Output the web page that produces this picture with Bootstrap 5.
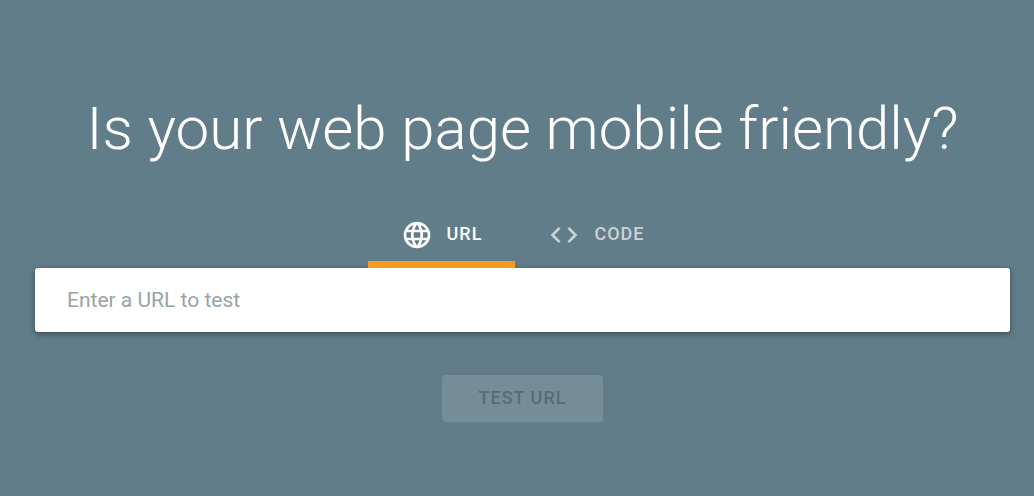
<!DOCTYPE html>
<html lang="en">
<head>
<meta charset="utf-8">
<meta name="viewport" content="width=device-width, initial-scale=1">
<title>Mobile-Friendly Test</title>
<link href="https://cdn.jsdelivr.net/npm/bootstrap@5.3.0/dist/css/bootstrap.min.css" rel="stylesheet">
<style>
body{background:#617d89;color:#fff;font-family:Roboto,sans-serif}
.test-page{padding:89px 24px 72px 35px}
.headline{font-size:60px;font-weight:300;line-height:80px;margin-bottom:35px}
.mode-tab{gap:14px;height:64px;padding:2px 33px 0;border:0;border-bottom:7px solid transparent;background:none;color:#cbd3d7;font-size:18px;font-weight:500;letter-spacing:1px;line-height:28px}
.mode-tab.active{color:#fff;border-bottom-color:#f89a20}
.mode-tab svg{width:32px;height:32px;margin-top:3px;fill:currentColor}
.url-field{height:64px;padding:0 32px;border:0;border-radius:3px;font-size:21px;box-shadow:0 2px 6px rgba(0,0,0,.4)}
.url-field::placeholder{color:#98a4a8}
.test-btn{margin-top:43px;height:47px;width:161px;padding:0 0 2px;border:0;border-radius:4px;background:#758d98;color:#546e7a;font-size:18px;font-weight:500;letter-spacing:1px}
</style>
</head>
<body>
<main class="test-page text-center">
<h1 class="headline">Is your web page mobile friendly?</h1>
<div class="d-flex justify-content-center" role="tablist">
<button type="button" class="mode-tab active d-flex align-items-center" role="tab" aria-selected="true"><svg viewBox="0 0 24 24" aria-hidden="true"><path d="M11.99 2C6.47 2 2 6.48 2 12s4.47 10 9.99 10C17.52 22 22 17.52 22 12S17.52 2 11.99 2zm6.93 6h-2.95a15.65 15.65 0 0 0-1.38-3.56A8.03 8.03 0 0 1 18.92 8zM12 4.04c.83 1.2 1.48 2.53 1.91 3.96h-3.82c.43-1.43 1.08-2.76 1.91-3.96zM4.26 14C4.1 13.36 4 12.69 4 12s.1-1.36.26-2h3.38c-.08.66-.14 1.32-.14 2s.06 1.34.14 2H4.26zm.82 2h2.95c.32 1.25.78 2.45 1.38 3.56A7.99 7.99 0 0 1 5.08 16zm2.95-8H5.08a7.99 7.99 0 0 1 4.33-3.56A15.65 15.65 0 0 0 8.03 8zM12 19.96c-.83-1.2-1.48-2.53-1.91-3.96h3.82c-.43 1.43-1.08 2.76-1.91 3.96zM14.34 14H9.66c-.09-.66-.16-1.32-.16-2s.07-1.35.16-2h4.68c.09.65.16 1.32.16 2s-.07 1.34-.16 2zm.25 5.56c.6-1.11 1.06-2.31 1.38-3.56h2.95a8.03 8.03 0 0 1-4.33 3.56zM16.36 14c.08-.66.14-1.32.14-2s-.06-1.34-.14-2h3.38c.16.64.26 1.31.26 2s-.1 1.36-.26 2h-3.38z"/></svg>URL</button>
<button type="button" class="mode-tab d-flex align-items-center" role="tab" aria-selected="false"><svg viewBox="0 0 24 24" aria-hidden="true"><path d="M9.4 16.6 4.8 12l4.6-4.6L8 6l-6 6 6 6 1.4-1.4zm5.2 0 4.6-4.6-4.6-4.6L16 6l6 6-6 6-1.4-1.4z"/></svg>CODE</button>
</div>
<form>
<input type="url" class="url-field form-control" placeholder="Enter a URL to test" aria-label="Enter a URL to test">
<button type="button" class="test-btn" disabled>TEST URL</button>
</form>
</main>
<script src="https://cdn.jsdelivr.net/npm/bootstrap@5.3.0/dist/js/bootstrap.bundle.min.js"></script>
</body>
</html>
